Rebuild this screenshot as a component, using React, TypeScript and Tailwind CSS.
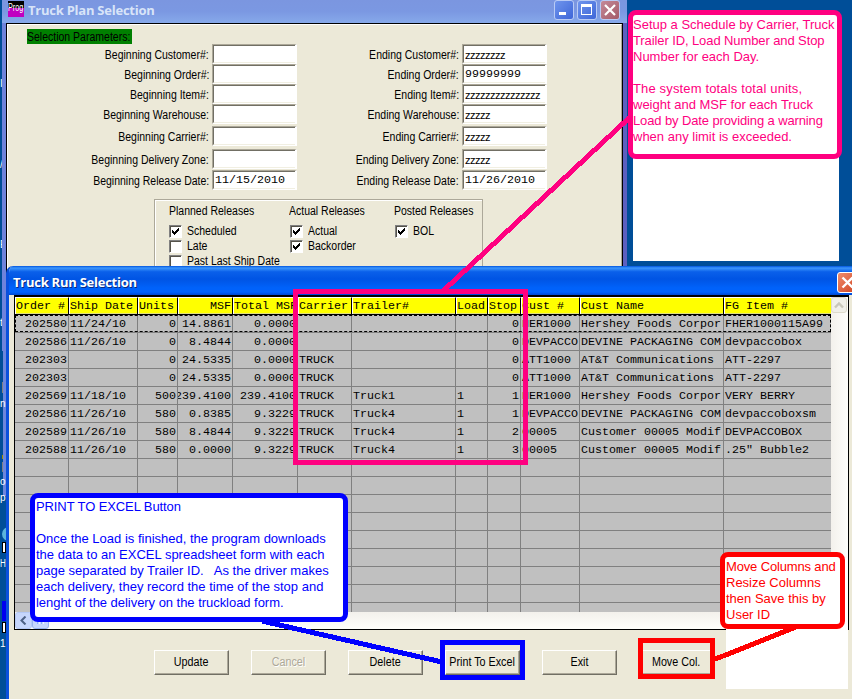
import React from "react";

const UI = "font-['Liberation_Sans',Arial,sans-serif]";
const MONO = "font-['Liberation_Mono','Courier_New',monospace]";

const COLS: { title: string; w: string; right?: boolean }[] = [
  { title: "Order #", w: "w-[54px]", right: true },
  { title: "Ship Date", w: "w-[69px]" },
  { title: "Units", w: "w-[40px]", right: true },
  { title: "MSF", w: "w-[55px]", right: true },
  { title: "Total MSF", w: "w-[65px]", right: true },
  { title: "Carrier", w: "w-[54px]" },
  { title: "Trailer#", w: "w-[104px]" },
  { title: "Load", w: "w-[32px]" },
  { title: "Stop", w: "w-[33px]", right: true },
  { title: "Cust #", w: "w-[59px]" },
  { title: "Cust Name", w: "w-[144px]" },
  { title: "FG Item #", w: "w-[107px]" },
];

const ROWS: string[][] = [
  ["202580", "11/24/10", "0", "14.8861", "0.0000", "", "", "", "0", "HER1000", "Hershey Foods Corpor", "FHER1000115A99"],
  ["202586", "11/26/10", "0", "8.4844", "0.0000", "", "", "", "0", "DEVPACCO", "DEVINE PACKAGING COM", "devpaccobox"],
  ["202303", "", "0", "24.5335", "0.0000", "TRUCK", "", "", "0", "ATT1000", "AT&T Communications", "ATT-2297"],
  ["202303", "", "0", "24.5335", "0.0000", "TRUCK", "", "", "0", "ATT1000", "AT&T Communications", "ATT-2297"],
  ["202569", "11/18/10", "500", "239.4100", "239.4100", "TRUCK", "Truck1", "1", "1", "HER1000", "Hershey Foods Corpor", "VERY BERRY"],
  ["202586", "11/26/10", "580", "0.8385", "9.3229", "TRUCK", "Truck4", "1", "1", "DEVPACCO", "DEVINE PACKAGING COM", "devpaccoboxsm"],
  ["202589", "11/26/10", "580", "8.4844", "9.3229", "TRUCK", "Truck4", "1", "2", "00005", "Customer 00005 Modif", "DEVPACCOBOX"],
  ["202588", "11/26/10", "580", "0.0000", "9.3229", "TRUCK", "Truck4", "1", "3", "00005", "Customer 00005 Modif", ".25\" Bubble2"],
  ...Array.from({ length: 9 }, () => Array<string>(12).fill("")),
];

const FIELDS: { name: string; begin: string; end: string; h: string }[] = [
  { name: "Customer#:", begin: "", end: "zzzzzzzz", h: "h-[20px]" },
  { name: "Order#:", begin: "", end: "99999999", h: "h-[20px]" },
  { name: "Item#:", begin: "", end: "zzzzzzzzzzzzzzz", h: "h-[20px]" },
  { name: "Warehouse:", begin: "", end: "zzzzz", h: "h-[22px]" },
  { name: "Carrier#:", begin: "", end: "zzzzz", h: "h-[23px]" },
  { name: "Delivery Zone:", begin: "", end: "zzzzz", h: "h-[21px]" },
  { name: "Release Date:", begin: "11/15/2010", end: "11/26/2010", h: "h-[20px]" },
];

function Field({ value }: { value: string }) {
  const face = value.startsWith("z")
    ? "font-['Liberation_Sans',Arial,sans-serif] text-[11px] tracking-[-0.5px]"
    : "font-['Liberation_Mono','Courier_New',monospace] text-[11.67px]";
  return (
    <div className="h-[20px] w-[85px] border-t border-l border-r-2 border-b border-t-[#aca899] border-l-[#aca899] border-r-white border-b-white">
      <div className={`flex h-[18px] items-center overflow-hidden border-t border-l border-b border-t-[#716f64] border-l-[#716f64] border-b-[#f1efe2] bg-white pt-[2px] pl-px leading-none text-black ${face}`}>
        {value}
      </div>
    </div>
  );
}

function Label({ text, right = false }: { text: string; right?: boolean }) {
  return (
    <span className={`inline-block scale-x-[0.84] whitespace-nowrap ${right ? "origin-right" : "origin-left"}`}>{text}</span>
  );
}

function Check({ label, checked = false }: { label: string; checked?: boolean }) {
  return (
    <div className="flex h-[15px] items-center gap-[5px]">
      <div className="flex size-[13px] shrink-0 items-center justify-center border border-t-[#808080] border-r-white border-b-white border-l-[#808080] bg-white shadow-[inset_1px_1px_0_#55534a]">
        {checked && (
          <svg width="9" height="9" viewBox="0 0 9 9" shapeRendering="crispEdges">
            <path d="M1 3h1v1h1v1h1V4h1V3h1V2h1V1h1v3H7v1H6v1H5v1H4v1H3V7H2V6H1z" fill="#000" />
          </svg>
        )}
      </div>
      <Label text={label} />
    </div>
  );
}

function PushButton({ label, disabled = false }: { label: string; disabled?: boolean }) {
  return (
    <button className={`flex h-[25px] w-[75px] items-center justify-center border border-t-white border-r-[#716f64] border-b-[#716f64] border-l-white bg-[#ece9d8] text-[12.5px] leading-none whitespace-nowrap shadow-[inset_-1px_-1px_0_#aca899] ${UI} ${disabled ? "text-[#aca899] [text-shadow:1px_1px_0_#fff]" : "text-black"}`}>
      <span className="inline-block origin-center scale-x-[0.86]">{label}</span>
    </button>
  );
}

function CaptionButton({ kind }: { kind: "min" | "max" | "close" }) {
  const tone = kind === "close" ? "from-[#c48a9a] to-[#a45a68]" : "from-[#6f94ec] to-[#3f66d8]";
  return (
    <div className={`flex size-[20px] items-center justify-center rounded-[3px] border border-[#b9cbf5] bg-gradient-to-br ${tone}`}>
      <svg width="18" height="18" viewBox="0 0 18 18" shapeRendering={kind === "close" ? "auto" : "crispEdges"}>
        {kind === "min" && <path d="M4 11h7v3H4z" fill="#fff" />}
        {kind === "max" && <path d="M3 3h11v11H3zM4 6v7h9V6z" fill="#fff" fillRule="evenodd" />}
        {kind === "close" && <path d="M4 4l10 10M14 4L4 14" stroke="#fff" strokeWidth="2.2" />}
      </svg>
    </div>
  );
}

function PlanWindow() {
  return (
    <div className="absolute top-0 left-[2px] h-[351px] w-[625px] bg-gradient-to-r from-[#6f83dc] via-[#7a90e2] to-[#5c5fc0]">
      <div className="flex h-[23px] items-start bg-gradient-to-b from-[#7b96e0] via-[#7b98e2] to-[#87a9ea] pl-[6px]">
        <div className="mt-px size-[16px] bg-[linear-gradient(#000_45%,#c000c0_45%)] font-['Liberation_Sans',Arial,sans-serif] text-[11px] leading-[13px] text-white">
          <span className="inline-block origin-left scale-x-[0.66]">Prog</span>
        </div>
        <div className="ml-[4px] grow font-['Open_Sans','Noto_Sans',sans-serif] text-[13px] leading-[21px] font-bold tracking-[-0.24px] text-[#d8e4f8]">
          Truck Plan Selection
        </div>
        <div className="mr-[7px] flex gap-[3px]">
          <CaptionButton kind="min" />
          <CaptionButton kind="max" />
          <CaptionButton kind="close" />
        </div>
      </div>
      <div className={`ml-[4px] h-[328px] w-[617px] border border-black bg-[#ece9d8] text-[12.5px] leading-none text-black ${UI}`}>
        <div className="h-full border-t border-r border-l border-t-white border-r-[#aca899] border-l-white">
          <div className="pt-[4px] pl-[19px]">
            <div className="flex h-[15px] w-[105px] items-center bg-[#008000] pt-px">
              <span className="w-[100px]"><Label text="Selection Parameters:" /></span>
            </div>
          </div>
          <div className="flex flex-col">
            {FIELDS.map((f) => (
              <div key={f.name} className={`flex items-start ${f.h}`}>
                <div className="flex h-[22px] w-[201px] items-center justify-end"><Label right text={`Beginning ${f.name}`} /></div>
                <div className="ml-[3px]"><Field value={f.begin} /></div>
                <div className="flex h-[22px] w-[162px] items-center justify-end"><Label right text={`Ending ${f.name}`} /></div>
                <div className="ml-[3px]"><Field value={f.end} /></div>
              </div>
            ))}
          </div>
          <div className="mt-[9px] ml-[146px] flex h-[120px] w-[329px] border border-[#aca899] pt-[5px] pl-[14px] shadow-[inset_1px_1px_0_#fff]">
            <div className="w-[121px] shrink-0">
              <div className="mb-[7px] h-[12px]"><Label text="Planned Releases" /></div>
              <Check label="Scheduled" checked />
              <Check label="Late" />
              <Check label="Past Last Ship Date" />
            </div>
            <div className="w-[105px] shrink-0">
              <div className="-ml-px mb-[7px] h-[12px]"><Label text="Actual Releases" /></div>
              <Check label="Actual" checked />
              <Check label="Backorder" checked />
            </div>
            <div className="w-[86px] shrink-0">
              <div className="-ml-px mb-[7px] h-[12px]"><Label text="Posted Releases" /></div>
              <Check label="BOL" checked />
            </div>
          </div>
        </div>
      </div>
    </div>
  );
}

function Grid() {
  return (
    <div className={`flex h-[335px] border-t-2 border-r border-b border-l border-black bg-white text-[11.67px] leading-none text-black ${MONO}`}>
      <div className="flex w-[816px] flex-col">
        <div className="h-[315px] overflow-hidden bg-[#c0c0c0]">
          <div className="flex h-[18px] border-b border-black">
            {COLS.map((c, i) => (
              <div key={c.title} className={`flex h-[17px] shrink-0 items-center overflow-hidden border-t border-l border-t-white border-l-white bg-[#ffff00] pt-[2px] whitespace-pre shadow-[inset_0_-1px_0_#e0e080] ${c.w} ${i < 11 ? "border-r border-r-black" : ""} ${c.title === "MSF" ? "justify-end pr-px" : ""}`}>
                {c.title}
              </div>
            ))}
          </div>
          {ROWS.map((r, ri) => (
            <div key={ri} className="relative flex h-[18px] border-b border-[#808080]">
              {r.map((v, i) => (
                <div key={i} className={`flex h-[17px] shrink-0 items-center overflow-hidden pt-[2px] whitespace-pre ${COLS[i].w} ${i < 11 ? "border-r border-[#808080]" : ""} ${COLS[i].right ? "justify-end pr-[1px]" : "pl-px"}`}>
                  {v}
                </div>
              ))}
              {ri === 0 && <div className="absolute inset-0 border border-dashed border-black" />}
            </div>
          ))}
        </div>
        <div className="flex h-[17px] bg-gradient-to-b from-[#f3f1ec] to-[#fefefb]">
          <div className="flex size-[17px] items-center justify-center rounded-[3px] border border-[#b4c8f6] bg-[#c6d6fc]">
            <svg width="9" height="9" viewBox="0 0 9 9"><path d="M6.5 0.5L2.5 4.5L6.5 8.5" fill="none" stroke="#4d6185" strokeWidth="2" /></svg>
          </div>
          <div className="flex h-[17px] w-[17px] items-center justify-center gap-px rounded-[3px] border border-[#98b4ee] bg-[#c6d6fc]">
            <i className="h-[6px] w-px bg-[#8cb0f8]" /><i className="h-[6px] w-px bg-[#eef4fe]" /><i className="h-[6px] w-px bg-[#8cb0f8]" /><i className="h-[6px] w-px bg-[#eef4fe]" />
          </div>
        </div>
      </div>
      <div className="w-[17px] bg-gradient-to-r from-[#f3f1ec] to-[#fefefb]">
        <div className="flex h-[16px] w-[16px] items-center justify-center rounded-[3px] border border-[#dddacb] bg-[#f0efe8]">
          <svg width="10" height="8" viewBox="0 0 10 8"><path d="M1 6.5L5 2.5L9 6.5" fill="none" stroke="#c9c7ba" strokeWidth="2.4" /></svg>
        </div>
      </div>
    </div>
  );
}

function RunWindow() {
  return (
    <div className="absolute top-[266px] left-[6px] h-[433px] w-[900px] overflow-hidden rounded-tl-[7px] border-l-3 border-[#0a50dc] bg-[#ece9d8]">
      <div className="-ml-[3px] flex h-[29px] items-center bg-[linear-gradient(#0054e0_0%,#3c96fc_7%,#0a60ea_20%,#0054e4_45%,#0062fa_75%,#0062fc_90%,#0048d0_100%)] pl-[7px]">
        <div className="w-[824px] pt-[3px] font-['Open_Sans','Noto_Sans',sans-serif] text-[13px] leading-none font-bold tracking-[-0.25px] whitespace-nowrap text-white [text-shadow:1px_1px_0_#0a2a80]">
          Truck Run Selection
        </div>
        <div className="mt-[3px] flex size-[21px] items-center justify-center rounded-[3px] border border-white bg-gradient-to-br from-[#ee8c6c] to-[#d0401c]">
          <svg width="19" height="19" viewBox="0 0 19 19"><path d="M4.5 4.5l10 10M14.5 4.500l-10 10" stroke="#fff" strokeWidth="2.4" /></svg>
        </div>
      </div>
      <div className="ml-[5px] w-[835px]"><Grid /></div>
      <div className="mt-[20px] ml-[145px] flex gap-[22px]">
        <PushButton label="Update" />
        <PushButton label="Cancel" disabled />
        <PushButton label="Delete" />
        <PushButton label="Print To Excel" />
        <PushButton label="Exit" />
        <PushButton label="Move Col." />
      </div>
    </div>
  );
}

function DesktopEdge() {
  return (
    <div className={`absolute top-0 left-0 h-[699px] w-[6px] overflow-hidden text-[10px] leading-none text-white ${UI}`}>
      <div className="absolute top-[351px] left-[3px] h-[145px] w-[3px] bg-[#6c86dc]" />
      <div className="absolute top-[79px] left-0">I</div>
      <div className="absolute top-[160px] left-0">/</div>
      <div className="absolute top-[240px] left-0">E</div>
      <div className="absolute top-[318px] left-0">t</div>
      <div className="absolute top-[399px] left-0">n</div>
      <div className="absolute top-[382px] left-[2px] h-[11px] w-px bg-[#808080]" />
      <div className="absolute top-[455px] left-[2px] h-[4px] w-px bg-[#a09000]" />
      <div className="absolute top-[462px] left-[2px] h-[10px] w-px bg-[#808080]" />
      <div className="absolute top-[477px] left-0">o</div>
      <div className="absolute top-[493px] left-0">p</div>
      <div className="absolute top-[527px] left-[2px] h-[14px] w-[8px] rounded-l-full bg-[#5cb4dc]" />
      <div className="absolute top-[542px] left-[2px] h-[11px] w-[4px] border border-black bg-white" />
      <div className="absolute top-[559px] left-0 origin-left scale-x-[0.8]">H</div>
      <div className="absolute top-[601px] left-[2px] h-[20px] w-[4px] bg-[#0000f0]" />
      <div className="absolute top-[622px] left-[2px] h-[11px] w-[4px] border border-black bg-white" />
      <div className="absolute top-[639px] left-0">1</div>
    </div>
  );
}

function Annotations() {
  return (
    <>
      <div className="absolute top-[558px] left-[726px] h-[131px] w-[122px] bg-white" />
      <svg className="absolute top-0 left-0" width="852" height="699" viewBox="0 0 852 699" fill="none" strokeWidth="5" shapeRendering="crispEdges">
        <path d="M630 117L443 291" stroke="#ff0080" />
        <path d="M262 621L442 662" stroke="#0000ff" />
        <path d="M796 627L718 658H713" stroke="#ff0000" />
      </svg>
      <div className="absolute top-[289px] left-[293px] h-[176px] w-[235px] border-5 border-[#ff0080]" />
      <div className="absolute top-[640px] left-[440px] h-[40px] w-[85px] border-5 border-[#0000ff]" />
      <div className="absolute top-[638px] left-[638px] h-[41px] w-[77px] border-5 border-[#ff0000]" />
      <div className={`absolute top-[10px] left-[628px] h-[149px] w-[214px] rounded-[8px] border-5 border-[#ff0080] bg-white pt-[2px] text-[13px] leading-[16px] whitespace-pre text-[#ff0080] ${UI}`}>
        <div>Setup a Schedule by Carrier, Truck</div>
        <div className="tracking-[-0.1px]">Trailer ID, Load Number and Stop</div>
        <div>Number for each Day.</div>
        <div className="mt-[16px] tracking-[0.15px]">The system totals total units,</div>
        <div>weight and MSF for each Truck</div>
        <div className="tracking-[-0.12px]">Load by Date providing a warning</div>
        <div>when any limit is exceeded.</div>
      </div>
      <div className={`absolute top-[493px] left-[30px] h-[129px] w-[318px] rounded-[8px] border-5 border-[#0000ff] bg-white pt-px pl-px text-[13px] leading-[16px] whitespace-pre text-[#0000ff] ${UI}`}>
        <div className="tracking-[-0.1px]">PRINT TO EXCEL Button</div>
        <div className="mt-[16px]">Once the Load is finished, the program downloads</div>
        <div>the data to an EXCEL spreadsheet form with each</div>
        <div>page separated by Trailer ID.   As the driver makes</div>
        <div>each delivery, they record the time of the stop and</div>
        <div className="tracking-[-0.04px]">lenght of the delivery on the truckload form.</div>
      </div>
      <div className={`absolute top-[552px] left-[720px] h-[77px] w-[125px] rounded-[8px] border-5 border-[#ff0000] bg-white pt-[2px] pl-px text-[13px] leading-[16px] whitespace-pre text-[#ff0000] ${UI}`}>
        <div className="tracking-[-0.15px]">Move Columns and</div>
        <div>Resize Columns</div>
        <div>then Save this by</div>
        <div>User ID</div>
      </div>
    </>
  );
}

export default function App() {
  return (
    <div className="relative h-[699px] w-[852px] overflow-hidden bg-[#004e98]">
      <DesktopEdge />
      <PlanWindow />
      <div className="absolute top-[16px] left-[633px] h-[245px] w-[206px] bg-white" />
      <RunWindow />
      <Annotations />
    </div>
  );
}
